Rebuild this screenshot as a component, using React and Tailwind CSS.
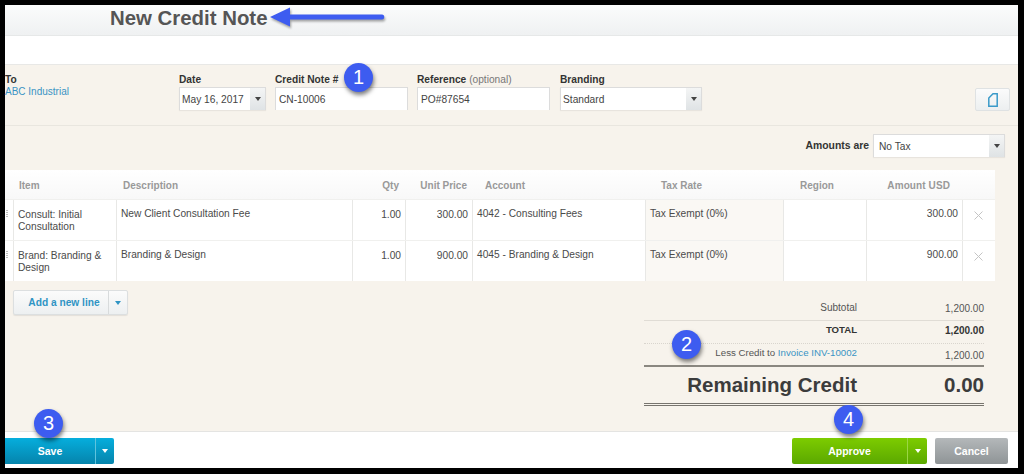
const Caret = ({ className = "border-t-[#444]" }) => (
  <span className={`block w-0 h-0 border-l-[3.5px] border-r-[3.5px] border-t-[4px] border-l-transparent border-r-transparent ${className}`} />
);

const Select = ({ value, w, h = "h-[23px]" }) => (
  <div className={`flex ${w} ${h} bg-white border border-[#dcdcdc] border-b-0 shadow-[0_1px_1px_rgba(0,0,0,0.06)]`}>
    <div className="flex-1 flex items-center pl-[2px] pt-[1px] text-[10.2px] text-[#444]">{value}</div>
    <div className="w-[15px] flex items-center justify-center bg-gradient-to-b from-[#f4f5f5] to-[#dfe3e5]"><Caret /></div>
  </div>
);

const Input = ({ value, w }) => (
  <div className={`flex items-center ${w} h-[23px] bg-white border border-[#dcdcdc] border-b-0 pl-[3px] pt-[1px] text-[10.2px] text-[#444]`}>{value}</div>
);

const Field = ({ label, hint, ml, children }) => (
  <div className={`flex flex-col ${ml}`}>
    <div className="h-[14px] leading-[14px] text-[10.2px] font-bold text-[#333] whitespace-nowrap">
      {label}{hint && <span className="font-normal text-[#777]"> {hint}</span>}
    </div>
    {children}
  </div>
);

const Badge = ({ n, className }) => (
  <div className={`absolute w-[29px] h-[29px] rounded-full bg-[#3d5cf0] text-white text-[20px] leading-[29px] text-center shadow-[1px_3px_4px_rgba(0,0,0,0.5)] ${className}`}>{n}</div>
);

const Row = ({ item, desc, unit, account, amount, last }) => {
  const b = "border-r border-[#e8e8e6]";
  return (
    <div className={`grid grid-cols-[9px_103px_236px_53px_67px_173px_138px_83px_96px_32px] text-[10.2px] text-[#4a4a4a] ${last ? "h-[40px]" : "h-[41px] border-b border-[#f0f0ee]"}`}>
      <div className={`${b} flex flex-col gap-[1px] pt-[10px] pl-[1px]`}>
        <span className="w-[2px] h-[1px] bg-[#bbb]" />
        <span className="w-[2px] h-[1px] bg-[#bbb]" />
        <span className="w-[2px] h-[1px] bg-[#bbb]" />
        <span className="w-[2px] h-[1px] bg-[#bbb]" />
      </div>
      <div className={`${b} pl-[4px] pr-[4px] pt-[9px] leading-[12px]`}>{item}</div>
      <div className={`${b} pl-[4px] pt-[7px] leading-[13px]`}>{desc}</div>
      <div className={`${b} text-right pr-[4px] pt-[9px] leading-[12px]`}>1.00</div>
      <div className={`${b} text-right pr-[4px] pt-[9px] leading-[12px]`}>{unit}</div>
      <div className={`${b} pl-[4px] pt-[8px] leading-[12px]`}>{account}</div>
      <div className={`${b} pl-[4px] pt-[8px] leading-[12px] bg-[#faf8f4]`}>Tax Exempt (0%)</div>
      <div className={b} />
      <div className={`${b} text-right pr-[4px] pt-[8px] leading-[12px]`}>{amount}</div>
      <div className="flex justify-center pt-[11px] pr-[2px]">
        <svg width="9" height="9" viewBox="0 0 9 9" stroke="#c4c4c4" strokeWidth="1"><path d="M0.5 0.5 8.5 8.5M8.5 0.5 0.5 8.5" /></svg>
      </div>
    </div>
  );
};

const HeadCell = ({ children, className = "" }) => <div className={`font-bold ${className}`}>{children}</div>;

export default function App() {
  return (
    <div className="relative w-[1024px] h-[474px] bg-black overflow-hidden pt-[5px] pl-[5px] pr-[6px] pb-[6px] text-[#444]" style={{ fontFamily: '"Liberation Sans", Arial, sans-serif' }}>
      <div className="flex flex-col h-[463px] bg-white">
        <div className="h-[31px] shrink-0 bg-gradient-to-b from-[#fbfcfc] to-[#eff1f2] border-b border-[#e6e8e8] pl-[105px] flex items-center">
          <h1 className="text-[20.4px] font-bold text-[#555] leading-[24px] pb-[4px]">New Credit Note</h1>
        </div>
        <div className="h-[29px] shrink-0 bg-white border-b border-[#e8e8e6]" />
        <div className="flex-1 flex flex-col bg-[#f7f3ec]">
          <div className="h-[61px] shrink-0 flex pt-[8px] border-b border-[#e9e6df]">
            <div className="w-[174px] shrink-0 pt-[1px]">
              <div className="h-[12px] leading-[12px] text-[10.2px] font-bold text-[#333]">To</div>
              <div className="h-[12px] leading-[12px] text-[10px] text-[#3a94c4]">ABC Industrial</div>
            </div>
            <Field label="Date">
              <Select value="May 16, 2017" w="w-[87px]" />
            </Field>
            <Field label="Credit Note #" ml="ml-[9px]"><Input value="CN-10006" w="w-[133px]" /></Field>
            <Field label="Reference" hint="(optional)" ml="ml-[9px]"><Input value="PO#87654" w="w-[133px]" /></Field>
            <Field label="Branding" ml="ml-[10px]"><Select value="Standard" w="w-[142px]" /></Field>
            <div className="ml-[273px] mt-[15px] w-[35px] h-[23px] flex items-center justify-center rounded-[2px] border border-[#dfe2e3] bg-gradient-to-b from-[#fbfbfb] to-[#eceff0]">
              <svg width="10" height="14" viewBox="0 0 10 14" fill="none" stroke="#3a9ac9" strokeWidth="1.5"><path d="M0.8 13.2V5L5 0.8H9.2V13.2Z" /></svg>
            </div>
          </div>
          <div className="h-[44px] shrink-0 flex items-start justify-end pt-[8px] pr-[13px]">
            <span className="text-[10.4px] font-bold text-[#333] h-[23px] leading-[23px] mr-[4px]">Amounts are</span>
            <Select value={<span className="pl-[3px]">No Tax</span>} w="w-[132px]" />
          </div>
          <div className="w-[990px] shrink-0 bg-white">
            <div className="grid grid-cols-[9px_103px_236px_53px_67px_173px_138px_83px_96px_32px] items-center h-[30px] pt-[1px] text-[10px] text-[#999] bg-gradient-to-b from-white to-[#f8f8f8] border-b border-[#f0f0ee]">
              <div />
              <HeadCell className="pl-[5px]">Item</HeadCell>
              <HeadCell className="pl-[6px]">Description</HeadCell>
              <HeadCell className="text-right pr-[7px]">Qty</HeadCell>
              <HeadCell className="text-right pr-[6px] whitespace-nowrap">Unit Price</HeadCell>
              <HeadCell className="pl-[12px]">Account</HeadCell>
              <HeadCell className="pl-[15px]">Tax Rate</HeadCell>
              <HeadCell className="pl-[16px]">Region</HeadCell>
              <HeadCell className="text-right pr-[13px] whitespace-nowrap tracking-[0.1px]">Amount USD</HeadCell>
              <div />
            </div>
            <Row item="Consult: Initial Consultation" desc="New Client Consultation Fee" unit="300.00" account="4042 - Consulting Fees" amount="300.00" />
            <Row item="Brand: Branding & Design" desc="Branding & Design" unit="900.00" account="4045 - Branding & Design" amount="900.00" last />
          </div>
          <div className="flex items-start flex-1">
            <div className="ml-[8px] mt-[9px] flex h-[25px] rounded-[2px] border border-[#dcdfe0] shadow-[0_1px_1px_rgba(0,0,0,0.08)] bg-gradient-to-b from-[#fbfbfb] to-[#edf0f1]">
              <div className="w-[95px] pl-[6px] pt-[1px] flex items-center justify-center text-[10.2px] font-bold text-[#2f94c4] border-r border-[#d8dbdc]">Add a new line</div>
              <div className="w-[18px] flex items-center justify-center"><Caret className="border-t-[#2f94c4]" /></div>
            </div>
            <div className="ml-[516px] w-[340px] text-[#555]">
              <div className="h-[40px] pt-[21px] flex text-[10px] border-b border-[#e0dcd5]">
                <span className="w-[213px] text-right leading-[12px]">Subtotal</span>
                <span className="flex-1 text-right leading-[14px]">1,200.00</span>
              </div>
              <div className="h-[23px] flex items-center pb-[3px] text-[9.6px] font-bold text-[#333] border-b border-dotted border-[#d9d5ce]">
                <span className="w-[213px] text-right">TOTAL</span>
                <span className="flex-1 text-right text-[10px]">1,200.00</span>
              </div>
              <div className="h-[23px] flex items-center text-[10px] border-b-2 border-[#8a8780]">
                <span className="w-[213px] text-right text-[9.7px] whitespace-nowrap pb-[2px] text-[#555]">Less Credit to <span className="text-[#3a94c4]">Invoice INV-10002</span></span>
                <span className="flex-1 text-right pt-[1px]">1,200.00</span>
              </div>
              <div className="h-[39px] flex items-center border-b-[3px] border-double border-[#77746e] text-[20.5px] font-bold text-[#3c3c3c]">
                <span className="w-[213px] text-right whitespace-nowrap">Remaining Credit</span>
                <span className="flex-1 text-right">0.00</span>
              </div>
            </div>
          </div>
        </div>
        <div className="h-[37px] shrink-0 bg-white border-t border-[#e4e4e2] flex items-start pt-[6px]">
          <div className="flex h-[26px] w-[109px] rounded-r-[2px] bg-gradient-to-b from-[#06aedd] to-[#0584ac] text-white text-[10.5px] font-bold">
            <div className="w-[91px] pt-[1px] flex items-center justify-center border-r border-[#5fc3dd]">Save</div>
            <div className="flex-1 flex items-center justify-center"><Caret className="border-t-white" /></div>
          </div>
          <div className="ml-[678px] flex h-[26px] w-[135px] rounded-[2px] bg-gradient-to-b from-[#7dcc00] to-[#5ba800] text-white text-[10.5px] font-bold">
            <div className="w-[116px] pt-[1px] flex items-center justify-center border-r border-[#9bd646]">Approve</div>
            <div className="flex-1 flex items-center justify-center"><Caret className="border-t-white" /></div>
          </div>
          <div className="ml-[8px] pt-[1px] flex items-center justify-center h-[26px] w-[73px] rounded-[2px] bg-gradient-to-b from-[#b4b8ba] to-[#8f9496] text-white text-[10.5px] font-bold">Cancel</div>
        </div>
      </div>

      <svg className="absolute left-[266px] top-[6px]" width="124" height="24" viewBox="0 0 124 24">
        <path d="M4 11 24 1.5 24 8.5 116 8.5C119 8.5 119 13.5 116 13.5L24 13.5 24 20.5Z" fill="#3d5cf0" style={{ filter: "drop-shadow(1px 2px 1px rgba(0,0,0,.35))" }} />
      </svg>
      <Badge n="1" className="left-[344px] top-[63px]" />
      <Badge n="2" className="left-[672px] top-[330px]" />
      <Badge n="3" className="left-[34px] top-[409px]" />
      <Badge n="4" className="left-[834px] top-[405px]" />
    </div>
  );
}
